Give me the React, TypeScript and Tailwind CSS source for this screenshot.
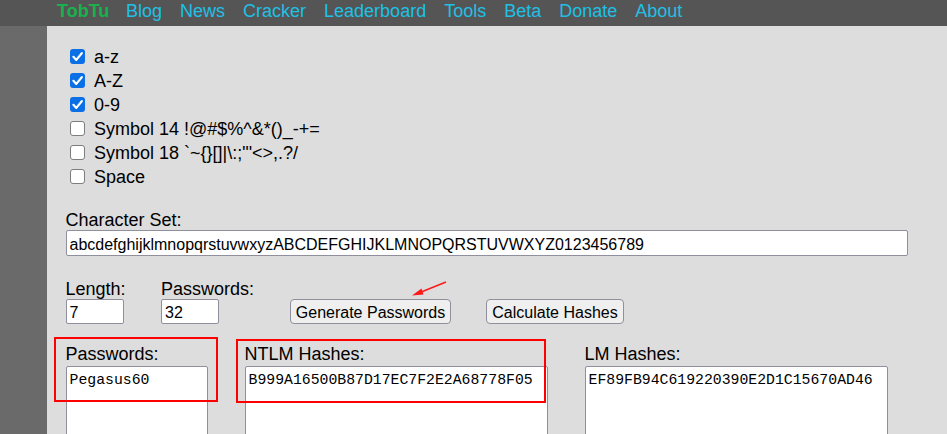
import React from "react";

function Box({ checked }: { checked: boolean }) {
  if (checked) {
    return (
      <span className="w-[15px] h-[15px] rounded-[3px] bg-[#0b6fe6] shrink-0 mt-[-2px]">
        <svg width="15" height="15" viewBox="0 0 15 15">
          <path d="M3.4 7.8 L6.3 10.9 L11.8 4.2" stroke="white" strokeWidth="2.2" fill="none" strokeLinecap="round" strokeLinejoin="round" />
        </svg>
      </span>
    );
  }
  return <span className="w-[15px] h-[15px] rounded-[3px] bg-white border-[1.5px] border-[#7d7d7d] shrink-0 mt-[-2px]" />;
}

const rows: [boolean, string][] = [
  [true, "a-z"],
  [true, "A-Z"],
  [true, "0-9"],
  [false, "Symbol 14 !@#$%^&*()_-+="],
  [false, "Symbol 18 `~{}[]|\\:;\"'<>,.?/"],
  [false, "Space"],
];

const nav = ["Blog", "News", "Cracker", "Leaderboard", "Tools", "Beta", "Donate", "About"];

export default function App() {
  return (
    <div className="relative w-[947px] h-[434px] overflow-hidden bg-[#dddddd] text-black font-['Liberation_Sans',Arial,sans-serif]">
      <div className="h-[26px] bg-[#555555] flex items-start gap-[18px] pl-[57px] pt-[0.5px] text-[18px] leading-[21px]">
        <span className="font-bold text-[#19b14c] w-[51px] whitespace-nowrap">TobTu</span>
        {nav.map((n) => (
          <span key={n} className="text-[#1fc0e6]">{n}</span>
        ))}
      </div>
      <div className="flex h-[408px]">
        <div className="w-[47px] bg-[#6a6a6a] shrink-0" />
        <div className="flex-1 pl-[18px] pt-[19px] text-[18px]">
          <div className="flex flex-col">
            {rows.map(([c, t]) => (
              <div key={t} className="h-6 leading-6 flex items-center pl-[5px] gap-[9px]">
                <Box checked={c} />
                <span className="whitespace-nowrap">{t}</span>
              </div>
            ))}
          </div>
          <div className="mt-[21px] leading-[20px] pl-[0.5px]">Character Set:</div>
          <input
            readOnly
            value="abcdefghijklmnopqrstuvwxyzABCDEFGHIJKLMNOPQRSTUVWXYZ0123456789"
            className="block ml-[0.5px] w-[842px] h-[26px] bg-white border border-[#8f8f9d] rounded-[2px] pl-[3px] pt-[4px] pb-0 text-[16px] outline-none"
          />
          <div className="mt-[23px] flex items-end">
            <div className="w-[96px] pl-[0.5px]">
              <div className="leading-[20px]">Length:</div>
              <input
                readOnly
                value="7"
                className="block w-[58px] h-[25px] bg-white border border-[#8f8f9d] rounded-[2px] pl-[3px] pt-[3px] pb-0 text-[16px] outline-none"
              />
            </div>
            <div className="w-[129px]">
              <div className="leading-[20px]">Passwords:</div>
              <input
                readOnly
                value="32"
                className="block w-[58px] h-[25px] bg-white border border-[#8f8f9d] rounded-[2px] pl-[3px] pt-[3px] pb-0 text-[16px] outline-none"
              />
            </div>
            <button className="w-[161px] h-[25px] bg-[#efefef] border border-[#8f8f9d] rounded-[4px] text-[16px] leading-[18px] pt-[2px] flex items-center justify-center whitespace-nowrap">
              Generate Passwords
            </button>
            <button className="ml-[35px] w-[138px] h-[25px] bg-[#efefef] border border-[#8f8f9d] rounded-[4px] text-[16px] leading-[18px] pt-[2px] flex items-center justify-center whitespace-nowrap">
              Calculate Hashes
            </button>
          </div>
          <div className="mt-[20px] flex gap-[37px] pl-[0.5px]">
            <div className="w-[142px]">
              <div className="leading-[20px] mb-[1.5px]">Passwords:</div>
              <textarea
                readOnly
                value="Pegasus60"
                className="block w-[142px] h-[150px] resize-none bg-white border border-[#8f8f9d] rounded-[2px] pl-[3px] pt-[3px] text-[14.8px] leading-[21px] font-['Liberation_Mono',monospace] outline-none"
              />
            </div>
            <div className="w-[303px]">
              <div className="leading-[20px] mb-[1.5px]">NTLM Hashes:</div>
              <textarea
                readOnly
                value="B999A16500B87D17EC7F2E2A68778F05"
                className="block w-[303px] h-[150px] resize-none bg-white border border-[#8f8f9d] rounded-[2px] pl-[3px] pt-[3px] text-[14.8px] leading-[21px] font-['Liberation_Mono',monospace] outline-none"
              />
            </div>
            <div className="w-[303px]">
              <div className="leading-[20px] mb-[1.5px]">LM Hashes:</div>
              <textarea
                readOnly
                value="EF89FB94C619220390E2D1C15670AD46"
                className="block w-[303px] h-[150px] resize-none bg-white border border-[#8f8f9d] rounded-[2px] pl-[3px] pt-[3px] text-[14.8px] leading-[21px] font-['Liberation_Mono',monospace] outline-none"
              />
            </div>
          </div>
        </div>
      </div>

      <div className="absolute left-[54px] top-[337px] w-[164px] h-[65px] border-2 border-[#ff0000]" />
      <div className="absolute left-[236px] top-[339px] w-[310px] h-[64px] border-2 border-[#ff0000]" />
      <svg className="absolute left-0 top-0 pointer-events-none" width="947" height="434">
        <line x1="446" y1="282" x2="420" y2="292.5" stroke="#ff1a1a" strokeWidth="1.6" />
        <polygon points="412,295.5 421.5,288.5 423.5,294.5" fill="#ff1a1a" />
      </svg>
    </div>
  );
}
